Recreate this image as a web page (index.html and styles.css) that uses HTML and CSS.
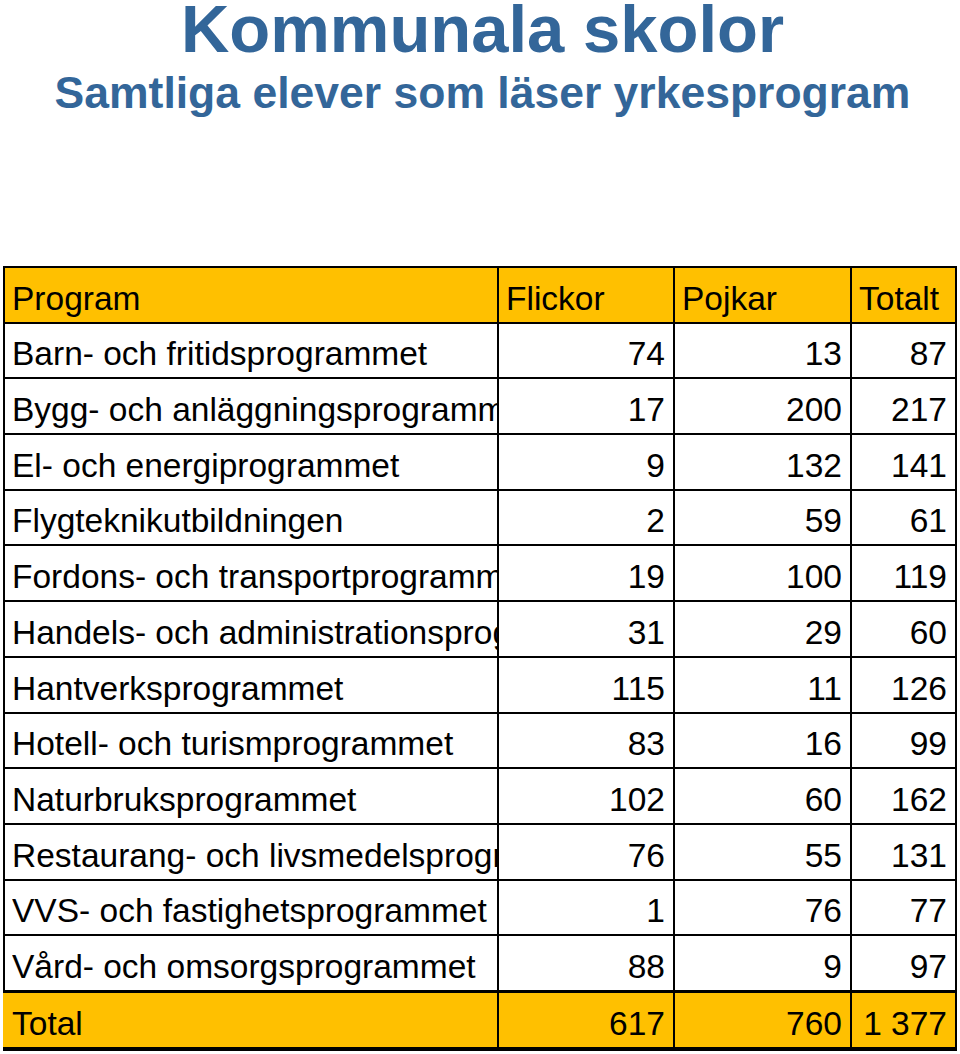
FILE: index.html
```html
<!DOCTYPE html>
<html lang="sv">
<head>
<meta charset="utf-8">
<title>Kommunala skolor</title>
<link rel="stylesheet" href="styles.css">
</head>
<body>
<header class="heading">
  <h1 class="title">Kommunala skolor</h1>
  <h2 class="subtitle">Samtliga elever som läser yrkesprogram</h2>
</header>
<table class="stats">
  <colgroup>
    <col class="c-name">
    <col class="c-num">
    <col class="c-num2">
    <col class="c-tot">
  </colgroup>
  <thead>
    <tr class="head">
      <th class="name"><div class="clip">Program</div></th>
      <th class="lbl">Flickor</th>
      <th class="lbl">Pojkar</th>
      <th class="lbl">Totalt</th>
    </tr>
  </thead>
  <tbody>
    <tr><td class="name"><div class="clip">Barn- och fritidsprogrammet</div></td><td>74</td><td>13</td><td>87</td></tr>
    <tr><td class="name"><div class="clip">Bygg- och anläggningsprogrammet</div></td><td>17</td><td>200</td><td>217</td></tr>
    <tr><td class="name"><div class="clip">El- och energiprogrammet</div></td><td>9</td><td>132</td><td>141</td></tr>
    <tr><td class="name"><div class="clip">Flygteknikutbildningen</div></td><td>2</td><td>59</td><td>61</td></tr>
    <tr><td class="name"><div class="clip">Fordons- och transportprogrammet</div></td><td>19</td><td>100</td><td>119</td></tr>
    <tr><td class="name"><div class="clip">Handels- och administrationsprogrammet</div></td><td>31</td><td>29</td><td>60</td></tr>
    <tr><td class="name"><div class="clip">Hantverksprogrammet</div></td><td>115</td><td>11</td><td>126</td></tr>
    <tr><td class="name"><div class="clip">Hotell- och turismprogrammet</div></td><td>83</td><td>16</td><td>99</td></tr>
    <tr><td class="name"><div class="clip">Naturbruksprogrammet</div></td><td>102</td><td>60</td><td>162</td></tr>
    <tr><td class="name"><div class="clip">Restaurang- och livsmedelsprogrammet</div></td><td>76</td><td>55</td><td>131</td></tr>
    <tr><td class="name"><div class="clip">VVS- och fastighetsprogrammet</div></td><td>1</td><td>76</td><td>77</td></tr>
    <tr class="last"><td class="name"><div class="clip">Vård- och omsorgsprogrammet</div></td><td>88</td><td>9</td><td>97</td></tr>
  </tbody>
  <tfoot>
    <tr class="total"><td class="name"><div class="clip">Total</div></td><td>617</td><td>760</td><td>1 377</td></tr>
  </tfoot>
</table>
</body>
</html>
```
FILE: styles.css
```css
html, body {
  margin: 0;
  padding: 0;
  background: #ffffff;
}
body {
  width: 960px;
  font-family: "Liberation Sans", Arial, sans-serif;
  color: #000;
}
.heading {
  text-align: center;
  padding-left: 5px;
  color: #336699;
}
.title {
  margin: 0;
  font-size: 67px;
  line-height: 58px;
  font-weight: bold;
}
.subtitle {
  margin: 10px 0 0;
  font-size: 44.5px;
  line-height: 50px;
  font-weight: bold;
}
.stats {
  margin: 148px 0 0 3px;
  width: 952px;
  table-layout: fixed;
  border-collapse: collapse;
  font-size: 33.5px;
}
.c-name { width: 494px; }
.c-num { width: 176px; }
.c-num2 { width: 177px; }
.c-tot { width: 105px; }
.stats th, .stats td {
  border: 2px solid #000;
  height: 49.7px;
  padding: 0 8px 4px 8px;
  line-height: 38px;
  vertical-align: bottom;
  text-align: right;
  font-weight: normal;
  white-space: nowrap;
  overflow: hidden;
}
.stats .name {
  text-align: left;
  padding-left: 7px;
  padding-right: 0;
}
.stats .lbl {
  text-align: left;
  padding-left: 7px;
}
.clip {
  overflow: hidden;
  white-space: nowrap;
}
.head th {
  background: #ffc000;
}
.total td {
  background: #ffc000;
  border-bottom: 4px solid #000;
}
.total td.name {
  border-left-color: #ffc000;
}
.last td {
  border-bottom: 3px solid #000;
}
```
